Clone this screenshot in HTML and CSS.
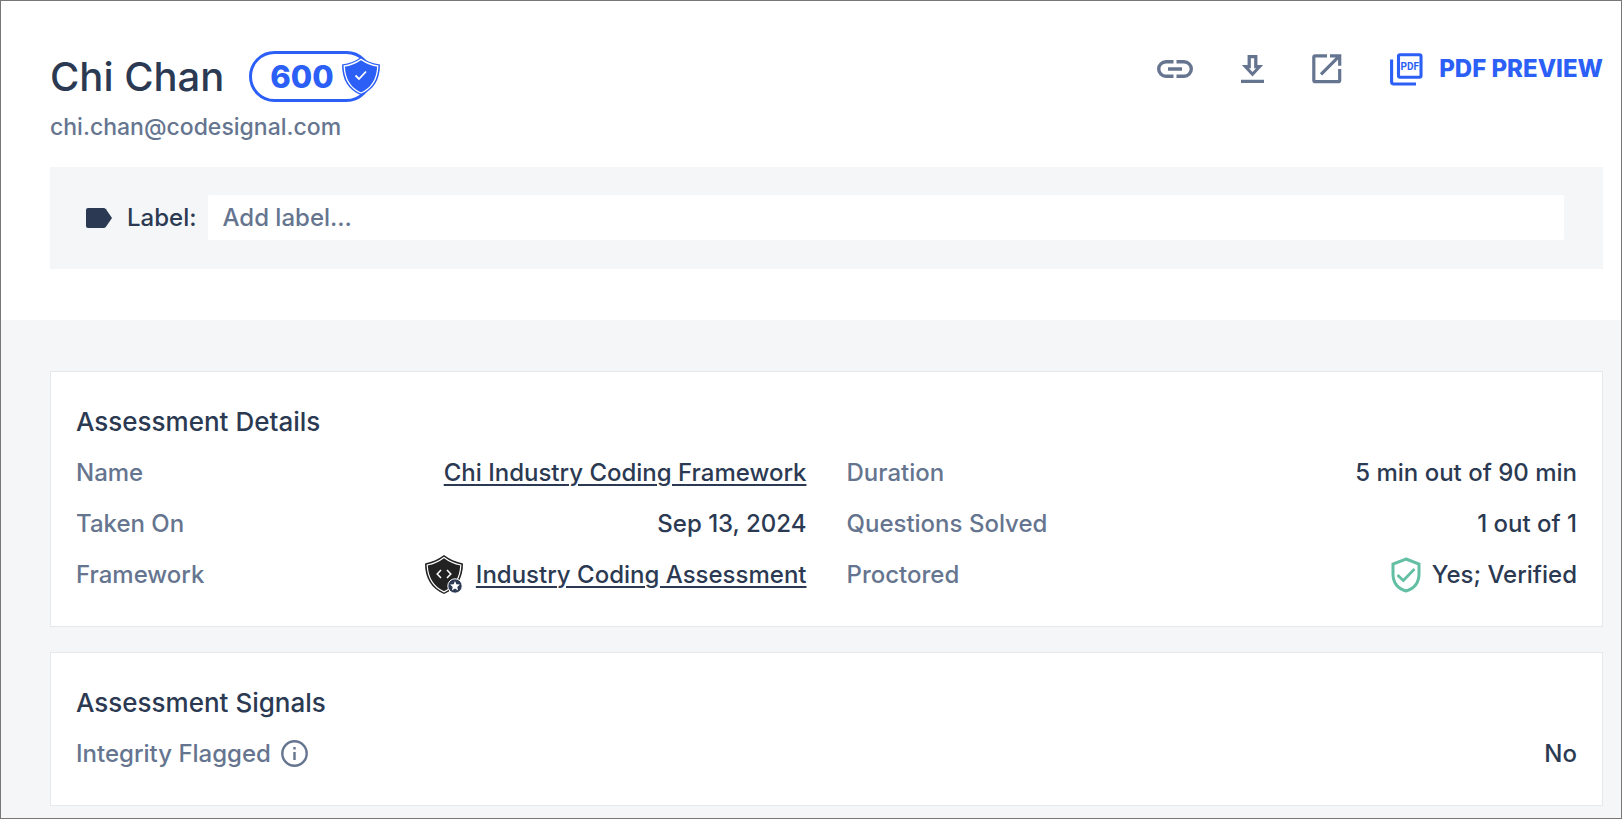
FILE: index.html
```html
<!DOCTYPE html>
<html lang="en">
<head>
<meta charset="utf-8">
<title>Chi Chan – Assessment Report</title>
<link rel="stylesheet" href="styles.css">
</head>
<body>
<div class="report">
  <header class="header">
    <div class="header-top">
      <div class="candidate">
        <div class="candidate-line">
          <h1 class="candidate-name">Chi Chan</h1>
          <div class="score">600
            <svg class="score-shield" width="38" height="38" viewBox="0 0 38 38" aria-hidden="true">
              <path d="M19 0C24 4 31 6.500 38 7.500C38 23 31.500 33 19 38C6.500 33 0 23 0 7.500C7 6.500 14 4 19 0Z" fill="#2b5ff5"/>
              <path d="M19 2.400C24 5.800 30 8.300 35.800 9C35.300 22 30 31.300 19 36C8 31.300 2.700 22 2.200 9C8 8.300 14 5.800 19 2.400Z" fill="none" stroke="#fff" stroke-width="1.300"/>
              <path d="M13.500 18.500L17 22L24 14.500" fill="none" stroke="#fff" stroke-width="1.800"/>
            </svg>
          </div>
        </div>
        <p class="email">chi.chan@codesignal.com</p>
      </div>
      <div class="actions">
        <button class="icon-button" type="button" aria-label="Copy link">
          <svg width="36" height="18" viewBox="0 0 36 18" fill="none" stroke="currentColor" stroke-width="3.400"><path d="M16.500 1.700H9A7.300 7.300 0 0 0 9 16.300H16.500M19.500 1.700H27A7.300 7.300 0 0 1 27 16.300H19.500M11 9H25"/></svg>
        </button>
        <button class="icon-button" type="button" aria-label="Download">
          <svg width="23" height="28" viewBox="5 3 14 17" fill="currentColor"><path d="M18.500 9H15V3H9v6H5.500l6.500 7zM11 11V5h2v6h1.170L12 13.300 9.830 11zM5 18h14v2H5z"/></svg>
        </button>
        <button class="icon-button" type="button" aria-label="Open in new window">
          <svg width="30" height="30" viewBox="0 0 30 30" fill="none" stroke="currentColor" stroke-width="3.200"><path d="M15 1.800H3.300Q1.800 1.800 1.800 3.300V26.200Q1.800 27.700 3.300 27.700H26.200Q27.700 27.700 27.700 26.200V15M18 1.800H27.700V11.700M9 20.300L26.500 2.800"/></svg>
        </button>
        <a class="pdf-link" href="#">
          <svg width="34" height="33" viewBox="0 0 34 33" aria-hidden="true"><path d="M1.600 6.500V28.800Q1.600 31 3.800 31H26" fill="none" stroke="currentColor" stroke-width="3.100"/><rect x="8.500" y="1.700" width="22.500" height="22.500" rx="1.500" fill="none" stroke="currentColor" stroke-width="3.100"/><text class="pdf-glyph" x="19.800" y="17" text-anchor="middle" fill="currentColor">PDF</text></svg>
          <span>PDF PREVIEW</span>
        </a>
      </div>
    </div>
    <div class="label-bar">
      <svg class="tag" width="26" height="20" viewBox="0 0 26 20" aria-hidden="true"><path d="M2 0H17.500Q19 0 20 1.200L26 10L20 18.800Q19 20 17.500 20H2Q0 20 0 18V2Q0 0 2 0Z" fill="#2b3a52"/></svg>
      <label class="label-text" for="label-input">Label:</label>
      <input class="label-input" id="label-input" type="text" placeholder="Add label...">
    </div>
  </header>
  <main class="content">
    <section class="card">
      <h2 class="card-title">Assessment Details</h2>
      <dl class="details">
        <div class="row"><dt>Name</dt><dd><a class="link" href="#">Chi Industry Coding Framework</a></dd></div>
        <div class="row"><dt>Duration</dt><dd>5 min out of 90 min</dd></div>
        <div class="row"><dt>Taken On</dt><dd>Sep 13, 2024</dd></div>
        <div class="row"><dt>Questions Solved</dt><dd>1 out of 1</dd></div>
        <div class="row"><dt>Framework</dt><dd class="framework">
          <svg width="38" height="39" viewBox="0 0 38 39" aria-hidden="true">
            <path d="M19 0C24 4 31 7 38 8.500C38 23.500 31.500 33.500 19 39C6.500 33.500 0 23.500 0 8.500C7 7 14 4 19 0Z" fill="#222"/>
            <path d="M19 2.500C24 6.300 30 8.800 35.800 10C35.300 22.500 30 31.800 19 36.900C8 31.800 2.700 22.500 2.200 10C8 8.800 14 6.300 19 2.500Z" fill="none" stroke="#fff" stroke-width="1.200"/>
            <path d="M16 15L12.200 19L16 23M22 15L25.800 19L22 23" fill="none" stroke="#fff" stroke-width="1.500"/>
            <circle cx="30" cy="31" r="7.200" fill="#2b3a52" stroke="#fff"/>
            <path d="M30 26L31.400 29.300L34.900 29.600L32.300 31.900L33.100 35.400L30 33.500L26.900 35.400L27.700 31.900L25.100 29.600L28.600 29.300Z" fill="#fff"/>
          </svg>
          <a class="link" href="#">Industry Coding Assessment</a></dd></div>
        <div class="row"><dt>Proctored</dt><dd class="proctored">
          <svg width="30" height="36" viewBox="0 0 30 36" fill="none" stroke="#63bfa3" aria-hidden="true"><path d="M15 2L28 7V17C28 25.500 23 31.500 15 34C7 31.500 2 25.500 2 17V7Z" stroke-width="3"/><path d="M6.500 18L12.300 23.500L23.500 12" stroke-width="2.700"/></svg>
          Yes; Verified</dd></div>
      </dl>
    </section>
    <section class="card">
      <h2 class="card-title">Assessment Signals</h2>
      <dl class="signals">
        <div class="row"><dt class="flagged">Integrity Flagged
          <svg width="27" height="27" viewBox="0 0 27 27" aria-hidden="true"><circle cx="13.500" cy="13.500" r="12.200" fill="none" stroke="currentColor" stroke-width="2.400"/><path d="M12.300 7H14.700V9.500H12.300ZM12.300 12H14.700V20H12.300Z" fill="currentColor"/></svg></dt>
          <dd>No</dd></div>
      </dl>
    </section>
  </main>
</div>
</body>
</html>
```
FILE: styles.css
```css
* { box-sizing: border-box; }

body {
  margin: 0;
  background: #fff;
  color: #2b3a52;
  font: 500 24px/30px Inter, "Open Sans", sans-serif;
}

h1, h2, p, dl, dd { margin: 0; }

.report {
  border: 1px solid #777;
  background: #f4f6f8;
}

.header {
  padding: 50px 18px 51px 49px;
  background: #fff;
}

.header-top {
  display: flex;
  justify-content: space-between;
  align-items: flex-start;
}

.candidate-line {
  display: flex;
  align-items: center;
  gap: 25px;
}

.candidate-name {
  font-size: 40px;
  font-weight: 500;
  line-height: 51px;
}

.score {
  position: relative;
  height: 51px;
  padding: 0 35px 0 18px;
  border: 3px solid #2b5ff5;
  border-radius: 26px;
  color: #2b5ff5;
  font-size: 31px;
  font-weight: 800;
  line-height: 45px;
}

.score-shield {
  position: absolute;
  top: 3px;
  right: -11px;
}

.email {
  padding: 10px 0 25px;
  color: #66758f;
  font-size: 23px;
}

.actions {
  display: flex;
  align-items: center;
  gap: 48px;
  height: 36px;
}

.icon-button {
  display: flex;
  padding: 0;
  border: 0;
  background: none;
  color: #66758f;
  cursor: pointer;
}

.pdf-link {
  display: flex;
  align-items: center;
  gap: 15px;
  color: #2b5ff5;
  font-weight: 800;
  text-decoration: none;
}

.pdf-glyph { font: 700 10px Roboto, sans-serif; }

.label-bar {
  display: flex;
  align-items: center;
  padding: 28px 39px 29px 36px;
  background: #f4f6f8;
}

.label-text { margin: 0 12px 0 15px; }

.label-input {
  flex: 1;
  min-width: 0;
  height: 45px;
  padding: 0 14px;
  border: 0;
  border-radius: 2px;
  background: #fff;
  color: #2b3a52;
  font: inherit;
}

.label-input::placeholder { color: #66758f; opacity: 1; }

.content {
  display: flex;
  flex-direction: column;
  gap: 25px;
  padding: 51px 18px 12px 49px;
}

.card {
  padding: 25px 25px 26px;
  border: 1px solid #e6e8eb;
  background: #fff;
}

.card-title {
  font-size: 26px;
  font-weight: 500;
  line-height: 50px;
}

.details {
  display: grid;
  grid-template-columns: 1fr 1fr;
  column-gap: 40px;
}

.row {
  display: flex;
  justify-content: space-between;
  align-items: center;
  height: 51px;
}

dt { color: #66758f; }

.link {
  color: inherit;
  text-decoration-thickness: 2px;
  text-underline-offset: 3px;
}

.framework, .proctored, .flagged {
  display: flex;
  align-items: center;
}

.framework { gap: 13px; }
.proctored { gap: 11px; }
.flagged { gap: 10px; }
```
